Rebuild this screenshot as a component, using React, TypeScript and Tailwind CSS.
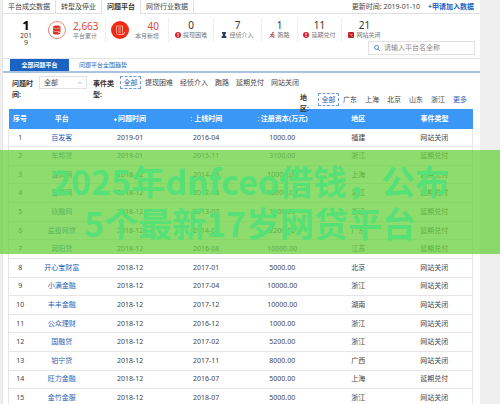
import type { ReactNode } from 'react';

interface Platform {
  name: string;
  problemAt: string;
  onlineAt: string;
  capital: string;
  area: string;
  event: string;
}

const platforms: Platform[] = [
  { name: '百发客', problemAt: '2019-01', onlineAt: '2016-04', capital: '1000.00', area: '福建', event: '网站关闭' },
  { name: '车邦贷', problemAt: '2019-01', onlineAt: '2015-11', capital: '3100.00', area: '浙江', event: '延期兑付' },
  { name: '温商网', problemAt: '2018-12', onlineAt: '2014-05', capital: '10000.00', area: '上海', event: '延期兑付' },
  { name: '爱贷网', problemAt: '2018-12', onlineAt: '2012-06', capital: '15000.00', area: '浙江', event: '延期兑付' },
  { name: '玖融网', problemAt: '2018-12', onlineAt: '2013-07', capital: '1100.00', area: '浙江', event: '延期兑付' },
  { name: '益投网贷', problemAt: '2018-12', onlineAt: '2014-05', capital: '2200.00', area: '广东', event: '延期兑付' },
  { name: '润阳贷', problemAt: '2018-12', onlineAt: '2016-08', capital: '10000.00', area: '江苏', event: '延期兑付' },
  { name: '开心宝财富', problemAt: '2018-12', onlineAt: '2017-01', capital: '5000.00', area: '北京', event: '网站关闭' },
  { name: '小满金融', problemAt: '2018-12', onlineAt: '2017-04', capital: '10000.00', area: '浙江', event: '网站关闭' },
  { name: '丰丰金融', problemAt: '2018-12', onlineAt: '2017-12', capital: '10000.00', area: '湖南', event: '网站关闭' },
  { name: '公众理财', problemAt: '2018-12', onlineAt: '2016-12', capital: '1000.00', area: '浙江', event: '网站关闭' },
  { name: '国融贷', problemAt: '2018-12', onlineAt: '2017-02', capital: '5200.00', area: '浙江', event: '网站关闭' },
  { name: '铂宁贷', problemAt: '2018-12', onlineAt: '2017-11', capital: '8000.00', area: '广西', event: '网站关闭' },
  { name: '旺力金融', problemAt: '2018-12', onlineAt: '2016-07', capital: '5000.00', area: '上海', event: '延期兑付' },
  { name: '金竹金服', problemAt: '2018-12', onlineAt: '2018-07', capital: '5000.00', area: '浙江', event: '网站关闭' },
];

const topTabs = ['平台成交数据', '转型及停业', '问题平台', '网贷行业数据'];
const eventTypes = ['提现困难', '经侦介入', '跑路', '延期兑付', '网站关闭'];
const areas = ['广东', '上海', '北京', '山东', '浙江'];

function AlertIcon() {
  return (
    <svg viewBox="0 0 12 12" className="size-[6px] shrink-0">
      <circle cx="6" cy="6" r="6" fill="#d9222f" />
      <path d="M5 2h2v5H5zM5 8h2v2H5z" fill="#fff" />
    </svg>
  );
}

function OfficerIcon() {
  return (
    <svg viewBox="0 0 12 12" className="size-[6px] shrink-0">
      <path d="M2 0h8v2L8 6l3 4v2H1v-2l3-4-2-4z" fill="#2b3f52" />
    </svg>
  );
}

function RunIcon() {
  return (
    <svg viewBox="0 0 12 12" className="size-[6px] shrink-0">
      <circle cx="8" cy="1.6" r="1.6" fill="#a3282c" />
      <path d="M7 4L3 5M7 4L5 8l4 1 1 3M5 8l-4 3M7 4l4 3" fill="none" stroke="#a3282c" strokeWidth="1.8" />
    </svg>
  );
}

function ClosedIcon() {
  return (
    <svg viewBox="0 0 12 12" className="size-[6px] shrink-0">
      <rect width="12" height="12" rx="2" fill="#c4202b" />
      <path d="M3 3l6 6M9 4L7 6" stroke="#f3b5b8" strokeWidth="1.5" />
    </svg>
  );
}

function TotalIcon() {
  return (
    <svg viewBox="0 0 36 36" className="size-[18px] shrink-0">
      <circle cx="18" cy="18" r="17" fill="#fff" stroke="#e0553f" strokeWidth="1.5" />
      <path d="M10 12c0-4 15-4 15 0v12c0 4-15 4-15 0z" fill="#d9301f" />
      <path d="M10 13c3 3 12 3 15 0M10 19c3 3 12 3 15 0" fill="none" stroke="#fff" strokeWidth="1" />
      <path d="M20 23h7" stroke="#fff" strokeWidth="1.2" />
    </svg>
  );
}

function NewIcon() {
  return (
    <svg viewBox="0 0 36 36" className="size-[18px] shrink-0">
      <circle cx="18" cy="18" r="18" fill="#ee2b14" />
      <path
        d="M11 10h12v13c0 4 4 4 4 1v-2M11 10v13c0 3 2 4 4 4h10M14 14h6M14 18h6M14 22h6"
        fill="none"
        stroke="#ffb9a8"
        strokeWidth="1.7"
      />
    </svg>
  );
}

function SortIcon({ active = false }: { active?: boolean }) {
  return (
    <svg viewBox="0 0 6 12" className="h-[6px] w-[3px] shrink-0">
      {!active && <path d="M3 1l2 3H1z" fill="#b5d8ff" />}
      <path d={active ? 'M3 4l3 3-3 4-3-4z' : 'M3 11L1 8h4z'} fill={active ? '#fff' : '#b5d8ff'} />
    </svg>
  );
}

function Stat({ value, label, icon }: { value: string; label: string; icon: ReactNode }) {
  return (
    <div className="flex flex-col items-center border-l border-dotted border-[#e2e2e2]">
      <span className="text-[10px] leading-[12px] text-[#333]">{value}</span>
      <span className="flex items-center gap-[2px] whitespace-nowrap text-[6px] leading-[8px] text-[#777]">
        {icon}
        {label}
      </span>
    </div>
  );
}

function AllButton() {
  return (
    <button type="button" className="h-[13px] w-[21px] shrink-0 border border-dashed border-[#6f9bd8] text-center leading-[11px] text-[#2a62b8]">
      全部
    </button>
  );
}

function SortHeader({ label, active }: { label: string; active?: boolean }) {
  return (
    <th className="p-0 font-bold">
      <button type="button" className="inline-flex items-center gap-px align-middle font-bold">
        <SortIcon active={active} />
        {label}
      </button>
    </th>
  );
}

export default function App() {
  return (
    <div className="relative flex h-screen items-stretch overflow-hidden bg-[#efefef] pl-[2px] pr-5 font-['Noto_Sans','Noto_Sans_CJK_SC',sans-serif] text-[7px] leading-[10px] text-[#444]">
      <main className="min-w-0 flex-1">
        <div className="border-l border-[#e6e6e6] bg-white">
          <header className="flex h-[14px] items-stretch border-b border-[#e0e0e0]">
            <nav className="flex flex-1">
              {topTabs.map((tab) => (
                <a
                  key={tab}
                  href="#"
                  className={`flex items-center whitespace-nowrap border-r border-[#e0e0e0] px-[5px] ${
                    tab === '问题平台' ? '-mb-px bg-white font-bold text-[#333]' : ''
                  }`}
                >
                  {tab}
                </a>
              ))}
            </nav>
            <span className="mr-2 self-center">更新时间: 2019-01-10</span>
            <a href="#" className="mr-[6px] self-center font-bold text-[#1f5fc0]">
              +申请加入数据
            </a>
          </header>

          <section className="flex h-[45px] border-b border-[#e4e4e4]">
            <div className="flex w-[43px] shrink-0 flex-col items-center pl-[3px] pt-[5px]">
              <strong className="text-[13px] leading-[13px] text-black">1</strong>
              <span className="w-3 break-all text-center leading-[7px]">2019</span>
            </div>
            <div className="flex-1 pt-[5px]">
              <div className="grid h-[22px] grid-cols-[59fr_63fr_45fr_48fr_36fr_44fr_46fr_93fr]">
                <div className="flex items-center gap-[7px] pl-[2px]">
                  <TotalIcon />
                  <div className="flex flex-col whitespace-nowrap text-[6px] leading-[8px] text-[#777]">
                    <span className="text-[10px] leading-[12px] text-[#dd4a3c]">2,663</span>
                    平台累计
                  </div>
                </div>
                <div className="flex items-center gap-[6px] border-l border-dotted border-[#e2e2e2] pl-[5px]">
                  <NewIcon />
                  <div className="flex flex-col whitespace-nowrap text-right text-[6px] leading-[8px] text-[#777]">
                    <span className="text-[10px] leading-[12px] text-[#dd4a3c]">40</span>
                    本月新增
                  </div>
                </div>
                <Stat value="0" label="提现困难" icon={<AlertIcon />} />
                <Stat value="7" label="经侦介入" icon={<OfficerIcon />} />
                <Stat value="1" label="跑路" icon={<RunIcon />} />
                <Stat value="11" label="延期兑付" icon={<AlertIcon />} />
                <Stat value="21" label="网站关闭" icon={<ClosedIcon />} />
              </div>
              <label className="ml-auto mr-[5px] flex h-[14px] w-[107px] items-center gap-1 border border-[#e2e2e2] pl-[5px]">
                <svg viewBox="0 0 12 12" className="size-[6px] shrink-0" fill="none" stroke="#3b7fd0" strokeWidth="1.8">
                  <circle cx="5" cy="5" r="4" />
                  <path d="M8 8l4 4" />
                </svg>
                <input
                  type="text"
                  aria-label="平台名全称"
                  placeholder="请输入平台名全称"
                  className="min-w-0 flex-1 outline-none placeholder:text-[#888]"
                />
              </label>
            </div>
          </section>

          <nav className="flex h-[14px] border-b-2 border-[#a9c4e2] pl-[7px] text-[6px]">
            <a href="#" className="flex w-[59px] items-center justify-center bg-[#1a63c2] font-bold text-white">
              全部问题平台
            </a>
            <a href="#" className="flex items-center pl-[10px] text-[#2a62b8]">
              问题平台全国趋势
            </a>
          </nav>

          <section className="pl-[9px] pr-[13px] pt-[3px]">
            <div className="flex h-[15px] items-start">
              <label htmlFor="period" className="w-[22px] pt-[2px] font-bold leading-[11px] text-[#333]">
                问题时间:
              </label>
              <div className="relative ml-[5px] h-[13px] w-[48px] border border-[#e2e2e2]">
                <select id="period" className="block h-full w-full appearance-none pl-1 leading-[10px] outline-none">
                  <option>全部</option>
                </select>
                <svg viewBox="0 0 8 8" className="pointer-events-none absolute right-1 top-[4px] size-1">
                  <path d="M1 2l3 3 3-3" fill="none" stroke="#999" strokeWidth="1.5" />
                </svg>
              </div>
              <span className="ml-[6px] w-[22px] pt-[2px] font-bold leading-[11px] text-[#333]">事件类型:</span>
              <div className="ml-[5px] flex items-center whitespace-nowrap">
                <AllButton />
                <div className="ml-1 flex gap-[7px]">
                  {eventTypes.map((type) => (
                    <button key={type} type="button">
                      {type}
                    </button>
                  ))}
                </div>
              </div>
            </div>
            <div className="relative z-10 flex h-[18px] items-start justify-end">
              <span className="w-[10px] pt-px font-bold leading-[11px] text-[#333]">地区:</span>
              <div className="ml-2 flex items-center whitespace-nowrap pt-[2px]">
                <AllButton />
                <div className="ml-1 flex gap-2">
                  {areas.map((area) => (
                    <button key={area} type="button">
                      {area}
                    </button>
                  ))}
                  <a href="#" className="text-[#2a62b8]">
                    更多
                  </a>
                </div>
              </div>
            </div>
          </section>

          <div className="pl-[5px] pr-[7px]">
            <table className="h-[299px] w-full table-fixed border-collapse text-center">
              <colgroup>
                <col className="w-[5%]" />
                <col className="w-[13%]" />
                <col />
                <col />
                <col />
                <col />
                <col />
              </colgroup>
              <thead className="bg-[#3b97f5] text-white">
                <tr className="h-5">
                  <th className="whitespace-nowrap p-0">序号</th>
                  <th className="p-0">平台</th>
                  <SortHeader label="问题时间" active />
                  <SortHeader label="上线时间" />
                  <SortHeader label="注册资本(万元)" />
                  <th className="p-0">地区</th>
                  <th className="p-0">事件类型</th>
                </tr>
              </thead>
              <tbody>
                {platforms.map((p, i) => (
                  <tr key={p.name} className="border border-t-0 border-[#e6e6e6]">
                    <td className="p-0">{i + 1}</td>
                    <td className="p-0">
                      <a href="#" className="text-[#2a62b8]">
                        {p.name}
                      </a>
                    </td>
                    <td className="p-0">{p.problemAt}</td>
                    <td className="p-0">{p.onlineAt}</td>
                    <td className="p-0">{p.capital}</td>
                    <td className="p-0">{p.area}</td>
                    <td className="p-0">{p.event}</td>
                  </tr>
                ))}
              </tbody>
            </table>
          </div>
        </div>
      </main>

      {/* Translucent banner across the table */}
      <div className="absolute inset-x-0 top-[150px] z-20 flex h-[104px] flex-col items-center justify-center whitespace-nowrap bg-[#68d03e]/75 font-['Noto_Sans_CJK_SC',sans-serif] text-[34px] font-bold leading-[42px] text-[#56e076]">
        <p>2025年dnfceo借钱，公布</p>
        <p>5个最新17岁网贷平台</p>
      </div>
    </div>
  );
}
